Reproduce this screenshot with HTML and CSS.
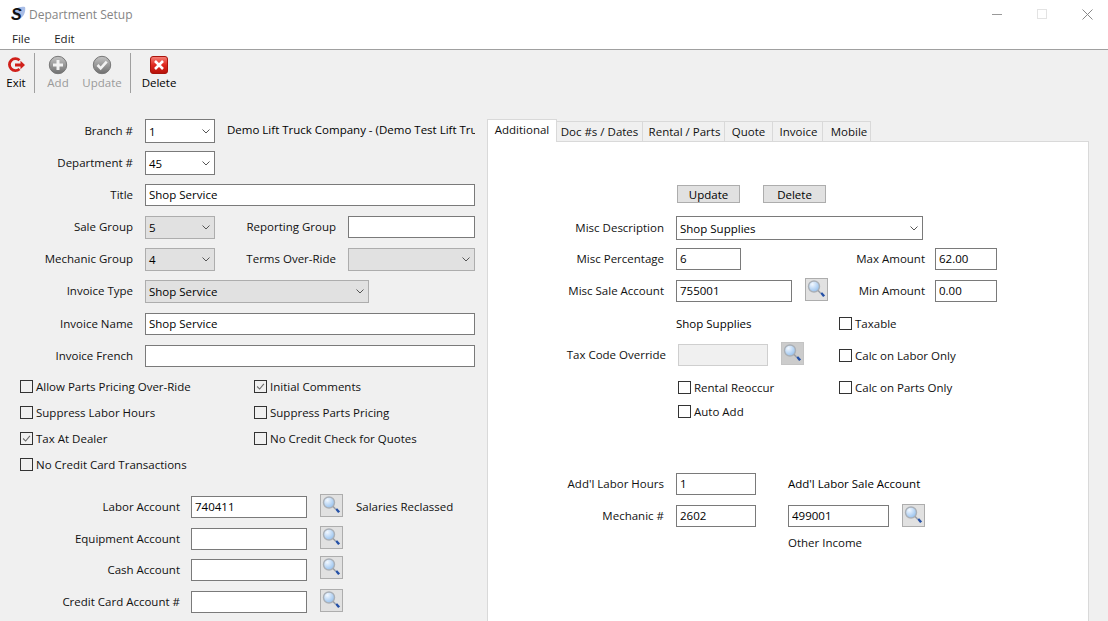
FILE: index.html
```html
<!DOCTYPE html>
<html lang="en">
<head>
<meta charset="utf-8">
<title>Department Setup</title>
<link rel="stylesheet" href="styles.css">
</head>
<body>
<svg class="defs" width="0" height="0" aria-hidden="true">
  <defs>
    <radialGradient id="lens" cx="35%" cy="30%" r="80%"><stop offset="0" stop-color="#f2f8ff"/><stop offset="1" stop-color="#8dbbec"/></radialGradient>
    <linearGradient id="redg" x1="0" y1="0" x2="0" y2="1"><stop offset="0" stop-color="#f6837a"/><stop offset=".5" stop-color="#e0281e"/><stop offset="1" stop-color="#b51109"/></linearGradient>
    <linearGradient id="greyg" x1="0" y1="0" x2="0" y2="1"><stop offset="0" stop-color="#c4c4c4"/><stop offset="1" stop-color="#6f6f6f"/></linearGradient>
    <symbol id="mag" viewBox="0 0 23 23">
      <circle cx="9" cy="8.500" r="5.500" fill="url(#lens)" stroke="#aab0b7" stroke-width="1.400"/>
      <path d="M13 12.500l2.500 2.500" stroke="#9a9fa6" stroke-width="1.600"/>
      <path d="M15.300 15.600l1.800-1.400 3 3.200-2 1.600z" fill="#2450a6"/>
    </symbol>
    <symbol id="chev" viewBox="0 0 8 5">
      <path d="M.5.5L4 4 7.500.5" fill="none" stroke="#555" stroke-width="1"/>
    </symbol>
    <symbol id="tick" viewBox="0 0 13 13">
      <path d="M2.500 6.500l3 3 5-6" fill="none" stroke="#6a6a6a" stroke-width="1.300"/>
    </symbol>
  </defs>
</svg>

<div class="window">
  <header class="titlebar">
    <span class="logo"><svg class="logo-swoosh" width="16" height="16" viewBox="0 0 16 16"><path d="M3 8C3 3 9 0 15 1c1 4-1 9-4 11z" fill="#a9bde6"/></svg><span class="logo-s">S</span></span>
    <span class="title">Department Setup</span>
    <div class="controls">
      <svg width="10" height="10" viewBox="0 0 10 10"><path d="M0 5.500h10" stroke="#999"/></svg>
      <svg width="10" height="10" viewBox="0 0 10 10"><rect x=".5" y=".5" width="9" height="9" fill="none" stroke="#e3e3e3"/></svg>
      <svg width="11" height="11" viewBox="0 0 11 11"><path d="M.5.5l10 10M10.500.5l-10 10" stroke="#888"/></svg>
    </div>
  </header>
  <nav class="menubar"><span>File</span><span>Edit</span></nav>

  <div class="toolbar">
    <div class="tool tool-exit">
      <svg class="tool-icon" width="20" height="20" viewBox="0 0 20 20"><path d="M13.500 5.200A6 6 0 1 0 13.500 14" fill="none" stroke="#d0201a" stroke-width="2.800"/><path d="M9 8.400h5.500V5.800L19 10l-4.500 4.200v-2.600H9z" fill="#d0201a"/></svg>
      <span>Exit</span>
    </div>
    <i class="sep"></i>
    <div class="tool tool-add disabled">
      <svg class="tool-icon" width="20" height="20" viewBox="0 0 20 20"><circle cx="10" cy="10" r="8.700" fill="url(#greyg)" stroke="#777"/><path d="M10 5v10M5 10h10" stroke="#f2f2f2" stroke-width="3"/></svg>
      <span>Add</span>
    </div>
    <div class="tool tool-update disabled">
      <svg class="tool-icon" width="20" height="20" viewBox="0 0 20 20"><circle cx="10" cy="10" r="8.700" fill="url(#greyg)" stroke="#777"/><path d="M5.500 10l3.200 3.300 6-6.600" fill="none" stroke="#f2f2f2" stroke-width="2.600"/></svg>
      <span>Update</span>
    </div>
    <i class="sep sep-2"></i>
    <div class="tool tool-delete">
      <svg class="tool-icon" width="20" height="20" viewBox="0 0 20 20"><rect x="1.500" y="1.500" width="17" height="17" rx="2.500" fill="url(#redg)" stroke="#a8140c"/><path d="M6 6l8 8M14 6l-8 8" stroke="#fff" stroke-width="2.600"/></svg>
      <span>Delete</span>
    </div>
  </div>

  <main class="main">
    <section class="left">
      <div class="row">
        <label class="lbl">Branch #</label>
        <div class="select white w70"><span>1</span><svg class="chev"><use href="#chev"/></svg></div>
        <span class="company">Demo Lift Truck Company - (Demo Test Lift Truc</span>
      </div>
      <div class="row">
        <label class="lbl">Department #</label>
        <div class="select white w70"><span>45</span><svg class="chev"><use href="#chev"/></svg></div>
      </div>
      <div class="row">
        <label class="lbl">Title</label>
        <input class="input w330" value="Shop Service">
      </div>
      <div class="row">
        <label class="lbl">Sale Group</label>
        <div class="select w70"><span>5</span><svg class="chev"><use href="#chev"/></svg></div>
        <label class="lbl lbl-mid">Reporting Group</label>
        <input class="input w127" value="">
      </div>
      <div class="row">
        <label class="lbl">Mechanic Group</label>
        <div class="select w70"><span>4</span><svg class="chev"><use href="#chev"/></svg></div>
        <label class="lbl lbl-mid">Terms Over-Ride</label>
        <div class="select w127"><span></span><svg class="chev"><use href="#chev"/></svg></div>
      </div>
      <div class="row">
        <label class="lbl">Invoice Type</label>
        <div class="select w224"><span>Shop Service</span><svg class="chev"><use href="#chev"/></svg></div>
      </div>
      <div class="row row-name">
        <label class="lbl">Invoice Name</label>
        <input class="input w330" value="Shop Service">
      </div>
      <div class="row">
        <label class="lbl">Invoice French</label>
        <input class="input w330" value="">
      </div>

      <div class="checks">
        <div class="check"><span class="box"></span>Allow Parts Pricing Over-Ride</div>
        <div class="check"><span class="box"><svg class="tick"><use href="#tick"/></svg></span>Initial Comments</div>
        <div class="check"><span class="box"></span>Suppress Labor Hours</div>
        <div class="check"><span class="box"></span>Suppress Parts Pricing</div>
        <div class="check"><span class="box"><svg class="tick"><use href="#tick"/></svg></span>Tax At Dealer</div>
        <div class="check"><span class="box"></span>No Credit Check for Quotes</div>
        <div class="check"><span class="box"></span>No Credit Card Transactions</div>
      </div>

      <div class="accounts">
        <div class="row acct">
          <label class="lbl lbl-acct">Labor Account</label>
          <input class="input w116" value="740411">
          <button class="search"><svg width="23" height="23"><use href="#mag"/></svg></button>
          <span class="note">Salaries Reclassed</span>
        </div>
        <div class="row acct">
          <label class="lbl lbl-acct">Equipment Account</label>
          <input class="input w116" value="">
          <button class="search"><svg width="23" height="23"><use href="#mag"/></svg></button>
        </div>
        <div class="row acct acct-short">
          <label class="lbl lbl-acct">Cash Account</label>
          <input class="input w116" value="">
          <button class="search"><svg width="23" height="23"><use href="#mag"/></svg></button>
        </div>
        <div class="row acct acct-tall">
          <label class="lbl lbl-acct">Credit Card Account #</label>
          <input class="input w116" value="">
          <button class="search"><svg width="23" height="23"><use href="#mag"/></svg></button>
        </div>
      </div>
    </section>

    <section class="right">
      <div class="tabs">
        <span class="tab active">Additional</span>
        <span class="tab t-doc">Doc #s / Dates</span>
        <span class="tab t-rent">Rental / Parts</span>
        <span class="tab t-quote">Quote</span>
        <span class="tab t-inv">Invoice</span>
        <span class="tab t-mob">Mobile</span>
      </div>
      <div class="panel">
        <div class="p-buttons">
          <button class="btn">Update</button>
          <button class="btn">Delete</button>
        </div>
        <div class="p-row p-row-first">
          <label class="plbl">Misc Description</label>
          <div class="select white w247"><span>Shop Supplies</span><svg class="chev"><use href="#chev"/></svg></div>
        </div>
        <div class="p-row">
          <label class="plbl">Misc Percentage</label>
          <input class="input w65" value="6">
          <label class="plbl plbl-amt">Max Amount</label>
          <input class="input w62" value="62.00">
        </div>
        <div class="p-row">
          <label class="plbl">Misc Sale Account</label>
          <input class="input w116" value="755001">
          <button class="search search-up"><svg width="23" height="23"><use href="#mag"/></svg></button>
          <label class="plbl plbl-amt2">Min Amount</label>
          <input class="input w62" value="0.00">
        </div>
        <div class="p-row">
          <span class="desc">Shop Supplies</span>
          <div class="check p-check"><span class="box"></span>Taxable</div>
        </div>
        <div class="p-row">
          <label class="plbl plbl-tax">Tax Code Override</label>
          <input class="input disabled-input w90" value="" disabled>
          <button class="search search-dark search-up"><svg width="23" height="23"><use href="#mag"/></svg></button>
          <div class="check p-check2"><span class="box"></span>Calc on Labor Only</div>
        </div>
        <div class="p-row">
          <div class="check p-check-left"><span class="box"></span>Rental Reoccur</div>
          <div class="check p-check3"><span class="box"></span>Calc on Parts Only</div>
        </div>
        <div class="p-row p-row-short">
          <div class="check p-check-left"><span class="box"></span>Auto Add</div>
        </div>
        <div class="p-row p-hours">
          <label class="plbl">Add'l Labor Hours</label>
          <input class="input w80" value="1">
          <span class="sale-title">Add'l Labor Sale Account</span>
        </div>
        <div class="p-row">
          <label class="plbl">Mechanic #</label>
          <input class="input w80" value="2602">
          <input class="input w101 mech-acct" value="499001">
          <button class="search"><svg width="23" height="23"><use href="#mag"/></svg></button>
        </div>
        <div class="p-other">Other Income</div>
      </div>
    </section>
  </main>
</div>
</body>
</html>
```
FILE: styles.css
```css
* { box-sizing: border-box; }
html, body { margin: 0; padding: 0; }
body {
  width: 1108px; height: 621px; overflow: hidden;
  background: #f0f0f0; color: #000;
  font-family: "Open Sans", "Noto Sans", sans-serif;
  font-size: 11.5px;
}
.defs { position: absolute; }
.window { display: flex; flex-direction: column; height: 621px; }

.titlebar { height: 28px; background: #fff; display: flex; align-items: center; padding-left: 10px; flex: none; }
.logo { width: 15px; height: 17px; display: block; margin-right: 4px; position: relative; }
.logo-swoosh { position: absolute; left: 0; top: 0; }
.logo-s { position: absolute; left: 1px; top: -1px; font: italic bold 16px/20px "Liberation Sans", sans-serif; color: #111; }
.title { color: #858585; font-size: 12px; }
.controls { margin-left: auto; display: flex; align-items: center; gap: 35px; padding-right: 15px; }

.menubar { height: 22px; background: #fff; border-bottom: 1px solid #a0a0a0; display: flex; gap: 24px; align-items: center; padding: 0 0 1px 12px; flex: none; color: #222; }

.toolbar { height: 65px; display: flex; align-items: flex-start; flex: none; padding-top: 3px; }
.tool { display: flex; flex-direction: column; align-items: center; height: 40px; line-height: 16px; }
.tool-icon { display: block; height: 20px; margin: 2px 0 0; }
.tool-exit { width: 32px; }
.tool-add { width: 44px; }
.tool-update { width: 44px; }
.tool-delete { width: 56px; }
.disabled { color: #9a9a9a; }
.sep { width: 1px; height: 40px; background: #a0a0a0; margin: 0 1px 0 2px; flex: none; }
.sep-2 { margin: 0 0 0 6px; }

.main { flex: 1; display: flex; min-height: 0; }
.left { width: 487px; flex: none; }
.row { height: 32px; display: flex; align-items: center; }
.row-name { margin-top: 1px; }
.lbl { width: 133px; text-align: right; margin-right: 12px; padding-bottom: 1px; flex: none; color: #111; }
.lbl-mid { width: 121px; margin: 0 12px 0 0; }
.lbl-acct { width: 180px; margin-right: 11px; }
.company { margin-left: 12px; width: 248px; padding-bottom: 3px; white-space: nowrap; overflow: hidden; }

.input { height: 22px; border: 1px solid #7a7a7a; background: #fff; padding: 0 3px 1px; font: inherit; color: #000; display: block; border-radius: 0; outline: 0; flex: none; }
.disabled-input { background: #f0f0f0; border: 1px solid #cfcfcf; }
.select { height: 23px; border: 1px solid #adadad; background: #e1e1e1; display: flex; align-items: center; justify-content: space-between; padding: 0 4px 0 3px; flex: none; }
.select.white { background: #fff; border-color: #7a7a7a; height: 24px; }
.chev { width: 8px; height: 5px; flex: none; }
.w65 { width: 65px; } .w62 { width: 62px; } .w70 { width: 70px; } .w80 { width: 80px; } .w90 { width: 90px; }
.w101 { width: 101px; } .w116 { width: 116px; } .w127 { width: 127px; } .w224 { width: 224px; } .w247 { width: 247px; } .w330 { width: 330px; }

.checks { display: grid; grid-template-columns: 234px 1fr; grid-auto-rows: 26px; padding: 1px 0 0 20px; }
.check { display: flex; align-items: center; color: #111; white-space: nowrap; }
.box { width: 13px; height: 13px; border: 1px solid #333; background: #fff; margin-right: 3px; display: block; flex: none; }
.checks .box { background: transparent; }
.tick { width: 11px; height: 11px; display: block; }

.accounts { padding-top: 14px; }
.acct-short { height: 29px; }
.acct-tall { height: 36px; }
.search { width: 23px; height: 23px; padding: 0; border: 1px solid #adadad; background: #e1e1e1; margin-left: 13px; flex: none; display: block; position: relative; top: -1px; }
.search svg { display: block; margin: -1px; }
.search-dark { background: #cccccc; border-color: #c4c4c4; }
.search-up { top: -2px; }
.acct .search { top: -2px; }
.note { margin-left: 13px; padding-bottom: 2px; color: #111; }

.right { flex: 1; padding: 4px 19px 0 0; display: flex; flex-direction: column; min-width: 0; }
.tabs { display: flex; height: 23px; flex: none; align-items: flex-end; position: relative; z-index: 1; }
.tab { height: 20px; border: 1px solid #d9d9d9; border-left: 0; border-bottom: 0; background: #f0f0f0; display: flex; align-items: center; justify-content: center; color: #111; margin-bottom: 1px; flex: none; }
.tab.active { height: 23px; width: 70px; background: #fff; border-left: 1px solid #d9d9d9; margin-bottom: 0; padding-bottom: 3px; }
.t-doc { width: 86px; } .t-rent { width: 82px; padding-left: 2px; } .t-quote { width: 48px; } .t-inv { width: 50px; padding-left: 2px; } .t-mob { width: 48px; padding-left: 5px; }
.panel { flex: 1; background: #fff; border: 1px solid #d9d9d9; border-bottom: 0; margin-top: -1px; padding: 43px 0 0 0; }

.p-buttons { display: flex; gap: 23px; padding-left: 189px; height: 28px; }
.btn { width: 63px; height: 18px; padding: 0; border: 1px solid #adadad; background: #e1e1e1; font: inherit; color: #000; line-height: 15px; }
.p-row { display: flex; align-items: center; height: 32px; }
.p-row-first { height: 30px; }
.plbl { width: 176px; text-align: right; margin-right: 12px; padding-bottom: 1px; flex: none; color: #111; }
.plbl-amt { width: 184px; margin: 0 10px 0 0; }
.plbl-amt2 { width: 97px; margin: 0 10px 0 0; }
.plbl-tax { width: 178px; margin-right: 12px; }
.desc { margin-left: 188px; width: 163px; flex: none; }
.p-check2 { margin-left: 35px; }
.p-check-left { margin-left: 190px; width: 161px; flex: none; }
.p-row-short { height: 16px; }
.p-hours { margin-top: 49px; }
.sale-title { margin-left: 32px; padding-bottom: 2px; }
.mech-acct { margin-left: 32px; }
.p-other { margin: 3px 0 0 300px; line-height: 16px; color: #111; }
```
